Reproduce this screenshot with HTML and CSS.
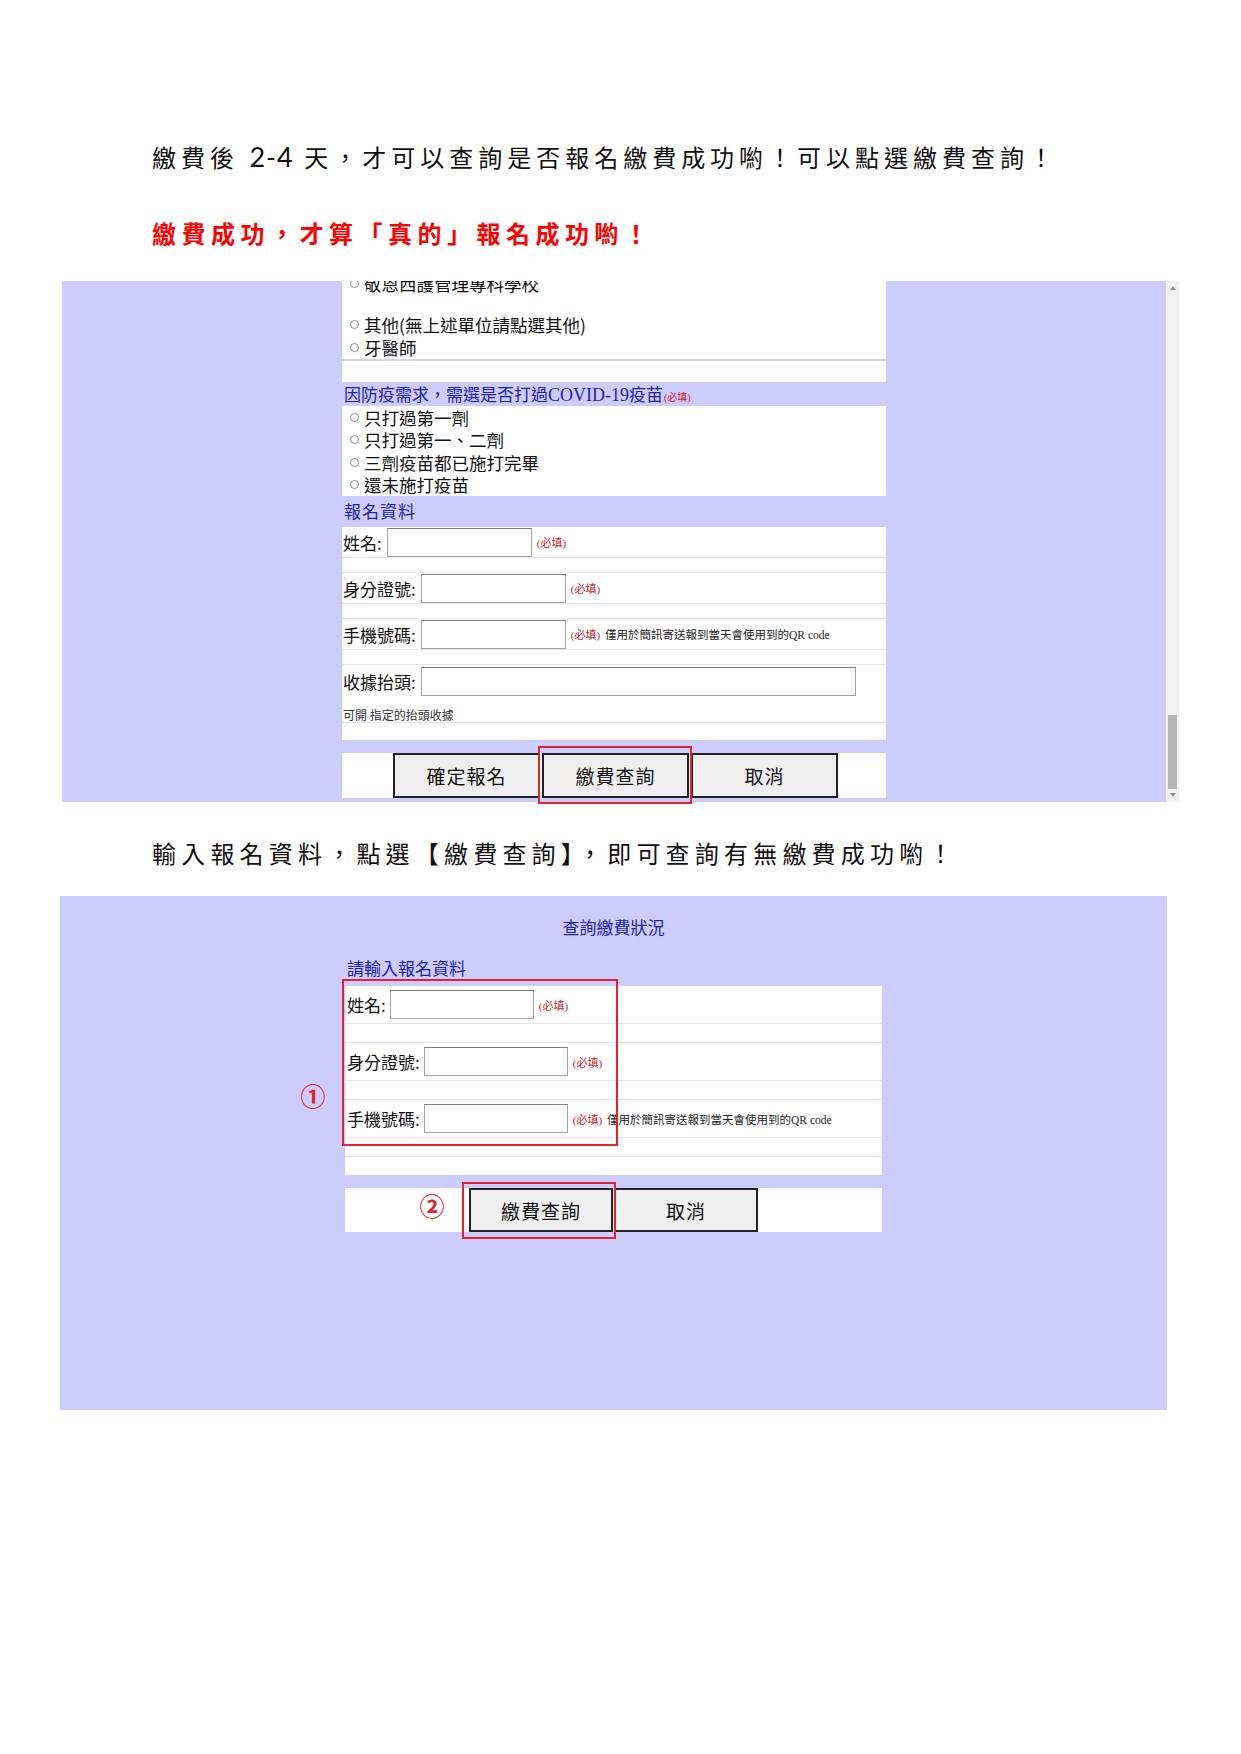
FILE: index.html
```html
<!DOCTYPE html>
<html lang="zh-Hant">
<head>
    <meta charset="UTF-8">
    <meta name="viewport" content="width=device-width, initial-scale=1.0">
    <title>繳費查詢說明</title>
    <link rel="stylesheet" href="styles.css">
</head>
<body>
<div class="page">

    <p class="intro">繳費後 <span class="num">2-4</span> 天，才可以查詢是否報名繳費成功喲！可以點選繳費查詢！</p>
    <p class="intro intro-red">繳費成功，才算「真的」報名成功喲！</p>

    <!-- 截圖一：報名表單 -->
    <div class="shot shot-one">
        <div class="viewport">
            <div class="panel panel-scrolled">
                <div class="choice-list choice-top">
                    <div class="choice"><span class="radio"></span>敬恩西護管理專科學校</div>
                    <div class="choice choice-push"><span class="radio"></span>其他(無上述單位請點選其他)</div>
                    <div class="choice"><span class="radio"></span>牙醫師</div>
                </div>
                <div class="blank"></div>

                <div class="band">因防疫需求，需選是否打過<span class="latin">COVID-19</span>疫苗<span class="req req-small">(必填)</span></div>
                <div class="choice-list choice-vaccine">
                    <div class="choice"><span class="radio"></span>只打過第一劑</div>
                    <div class="choice"><span class="radio"></span>只打過第一、二劑</div>
                    <div class="choice"><span class="radio"></span>三劑疫苗都已施打完畢</div>
                    <div class="choice"><span class="radio"></span>還未施打疫苗</div>
                </div>

                <div class="band band-title">報名資料</div>
                <div class="row">
                    <label for="name1">姓名:</label><input type="text" id="name1" class="field">
                    <span class="req">(必填)</span>
                </div>
                <div class="gap"></div>
                <div class="row">
                    <label for="id1">身分證號:</label><input type="text" id="id1" class="field">
                    <span class="req">(必填)</span>
                </div>
                <div class="gap"></div>
                <div class="row">
                    <label for="phone1">手機號碼:</label><input type="text" id="phone1" class="field">
                    <span class="req">(必填)</span><span class="tip">僅用於簡訊寄送報到當天會使用到的QR code</span>
                </div>
                <div class="gap"></div>
                <div class="row row-tall">
                    <div class="row-line">
                        <label for="title1">收據抬頭:</label><input type="text" id="title1" class="field field-wide">
                    </div>
                    <div class="hint">可開 指定的抬頭收據</div>
                </div>
                <div class="gap-end"></div>
            </div>

            <div class="button-bar">
                <button>確定報名</button>
                <button>繳費查詢</button>
                <button>取消</button>
            </div>
        </div>

        <div class="scrollbar">
            <span class="arrow arrow-up"></span>
            <span class="track"></span>
            <span class="thumb"></span>
            <span class="arrow arrow-down"></span>
        </div>

        <div class="mark mark-button"></div>
    </div>

    <p class="intro intro-step">輸入報名資料，點選【繳費查詢】，即可查詢有無繳費成功喲！</p>

    <!-- 截圖二：查詢繳費狀況 -->
    <div class="shot shot-two">
        <div class="query-title">查詢繳費狀況</div>
        <div class="query-sub">請輸入報名資料</div>

        <div class="panel panel-query">
            <div class="row">
                <label for="name2">姓名:</label><input type="text" id="name2" class="field">
                <span class="req">(必填)</span>
            </div>
            <div class="gap"></div>
            <div class="row">
                <label for="id2">身分證號:</label><input type="text" id="id2" class="field">
                <span class="req">(必填)</span>
            </div>
            <div class="gap"></div>
            <div class="row">
                <label for="phone2">手機號碼:</label><input type="text" id="phone2" class="field">
                <span class="req">(必填)</span><span class="tip">僅用於簡訊寄送報到當天會使用到的QR code</span>
            </div>
            <div class="gap"></div>
            <div class="gap-end"></div>
        </div>

        <div class="button-bar button-bar-query">
            <button>繳費查詢</button>
            <button>取消</button>
        </div>

        <div class="mark mark-fields"></div>
        <div class="mark mark-query"></div>
        <span class="step step-one">①</span>
        <span class="step step-two">②</span>
    </div>

</div>
</body>
</html>
```

FILE: styles.css
```css
:root {
    --lavender: #ccccff;
    --line: #e4e4f2;
    --link-blue: #1f1fa8;
    --mark-red: #e3222b;
}

* {
    box-sizing: border-box;
    margin: 0;
    padding: 0;
}

body {
    background: #fff;
    color: #111;
    font-family: "Noto Sans CJK TC", sans-serif;
}

.page {
    width: 1241px;
    padding-top: 139px;
    padding-bottom: 300px;
}

/* 說明文字 */
.intro {
    padding-left: 152px;
    font-size: 24px;
    line-height: 36px;
    letter-spacing: 5px;
    color: #111;
}

.intro .num {
    font-family: Lato, "Liberation Sans", sans-serif;
    font-size: 27px;
    letter-spacing: 1px;
}

.intro-red {
    margin-top: 40px;
    color: #f00;
    font-weight: 700;
    letter-spacing: 5.5px;
}

.intro-step {
    margin-top: 33px;
    letter-spacing: 5.2px;
}

/* 截圖外框 */
.shot {
    position: relative;
}

.shot-one {
    display: flex;
    width: 1117px;
    margin: 30px 0 0 62px;
}

.viewport {
    width: 1104px;
    height: 521px;
    background: var(--lavender);
    overflow: hidden;
    display: flex;
    flex-direction: column;
    align-items: center;
}

.panel {
    width: 544px;
    background: #fff;
}

.panel-scrolled {
    margin-top: -9px;
}

/* 單選項目 */
.choice {
    display: flex;
    align-items: center;
    height: 23px;
    padding-left: 8px;
    font-size: 17.5px;
    color: #111;
}

.choice-push {
    margin-top: 18px;
}

.choice-top {
    border-bottom: 2px solid #d2d2ef;
}

.choice-vaccine .choice {
    height: 22.5px;
}

.radio {
    width: 9px;
    height: 9px;
    border: 1px solid #8a8a8a;
    border-radius: 50%;
    margin-right: 5px;
}

.blank {
    height: 21px;
}

.band {
    background: var(--lavender);
    height: 24px;
    line-height: 24px;
    padding-left: 2px;
    font-size: 17px;
    color: var(--link-blue);
}

.band-title {
    height: 31px;
    line-height: 30px;
    font-size: 17px;
    letter-spacing: 1px;
}

.latin {
    font-family: "Liberation Serif", serif;
    font-size: 18px;
}

/* 表單列 */
.row {
    display: flex;
    align-items: center;
    height: 31px;
    padding-left: 1px;
    border-bottom: 1px solid var(--line);
    font-size: 17px;
}

.row label {
    line-height: 1;
}

.gap {
    height: 15px;
    border-bottom: 1px solid var(--line);
}

.gap-end {
    height: 17px;
}

.row-tall {
    height: 58px;
    flex-direction: column;
    align-items: flex-start;
    padding-top: 2px;
}

.row-line {
    display: flex;
    align-items: center;
}

.field {
    width: 145px;
    height: 29px;
    margin-left: 5px;
    border: 1px solid #a3a3a3;
    border-top-color: #7c7c7c;
    background: #fff;
}

.field-wide {
    width: 435px;
}

.req {
    margin-left: 5px;
    font-family: "Liberation Serif", "Noto Sans CJK TC", serif;
    font-size: 11px;
    color: #d42020;
}

.req-small {
    margin-left: 1px;
    font-size: 10px;
}

.tip {
    margin-left: 5px;
    font-family: "Liberation Serif", "Noto Sans CJK TC", serif;
    font-size: 11.5px;
    color: #222;
}

.hint {
    margin-top: 12px;
    line-height: 14px;
    font-size: 12px;
    color: #333;
}

/* 按鈕 */
.button-bar {
    display: flex;
    gap: 2px;
    width: 544px;
    height: 45px;
    margin-top: 13px;
    padding-left: 51px;
    background: #fff;
}

.button-bar button {
    width: 147px;
    height: 45px;
    background: #efefef;
    border: 2px solid #222;
    font-family: "Noto Sans CJK TC", sans-serif;
    font-size: 19px;
    letter-spacing: 1px;
    color: #111;
}

/* 捲軸 */
.scrollbar {
    width: 13px;
    height: 521px;
    background: #f1f1f1;
    display: flex;
    flex-direction: column;
    align-items: center;
}

.arrow {
    width: 0;
    height: 0;
    border-left: 3px solid transparent;
    border-right: 3px solid transparent;
}

.arrow-up {
    margin-top: 5px;
    border-bottom: 4px solid #8f8f8f;
}

.arrow-down {
    margin: 4px 0 5px;
    border-top: 4px solid #8f8f8f;
}

.track {
    flex: 1;
}

.thumb {
    width: 9px;
    height: 74px;
    background: #b4b4b4;
}

/* 第二張截圖 */
.shot-two {
    width: 1107px;
    height: 514px;
    margin: 25px 0 0 60px;
    padding-top: 18px;
    background: var(--lavender);
    display: flex;
    flex-direction: column;
    align-items: center;
}

.query-title {
    font-size: 17px;
    line-height: 26px;
    color: var(--link-blue);
}

.query-sub {
    width: 537px;
    height: 30px;
    margin-top: 16px;
    padding-left: 2px;
    line-height: 24px;
    font-size: 17px;
    color: var(--link-blue);
}

.panel-query {
    width: 537px;
}

.panel-query .row {
    height: 38px;
    padding-left: 2px;
}

.panel-query .field {
    margin-left: 4px;
    width: 144px;
}

.panel-query .gap {
    height: 19px;
}

.panel-query .gap-end {
    height: 18px;
}

.button-bar-query {
    width: 537px;
    height: 44px;
    gap: 1px;
    padding-left: 124px;
}

.button-bar-query button {
    width: 144px;
    height: 44px;
}

/* 紅色標示 */
.mark {
    position: absolute;
    border: 2px solid var(--mark-red);
}

.mark-button {
    left: 476px;
    top: 465px;
    width: 154px;
    height: 58px;
}

.mark-fields {
    left: 282px;
    top: 83px;
    width: 276px;
    height: 167px;
}

.mark-query {
    left: 402px;
    top: 286px;
    width: 154px;
    height: 57px;
}

.step {
    position: absolute;
    width: 30px;
    height: 30px;
    line-height: 30px;
    text-align: center;
    font-size: 25px;
    font-weight: 700;
    color: var(--mark-red);
}

.step-one {
    left: 238px;
    top: 184px;
}

.step-two {
    left: 357px;
    top: 294px;
}
```
